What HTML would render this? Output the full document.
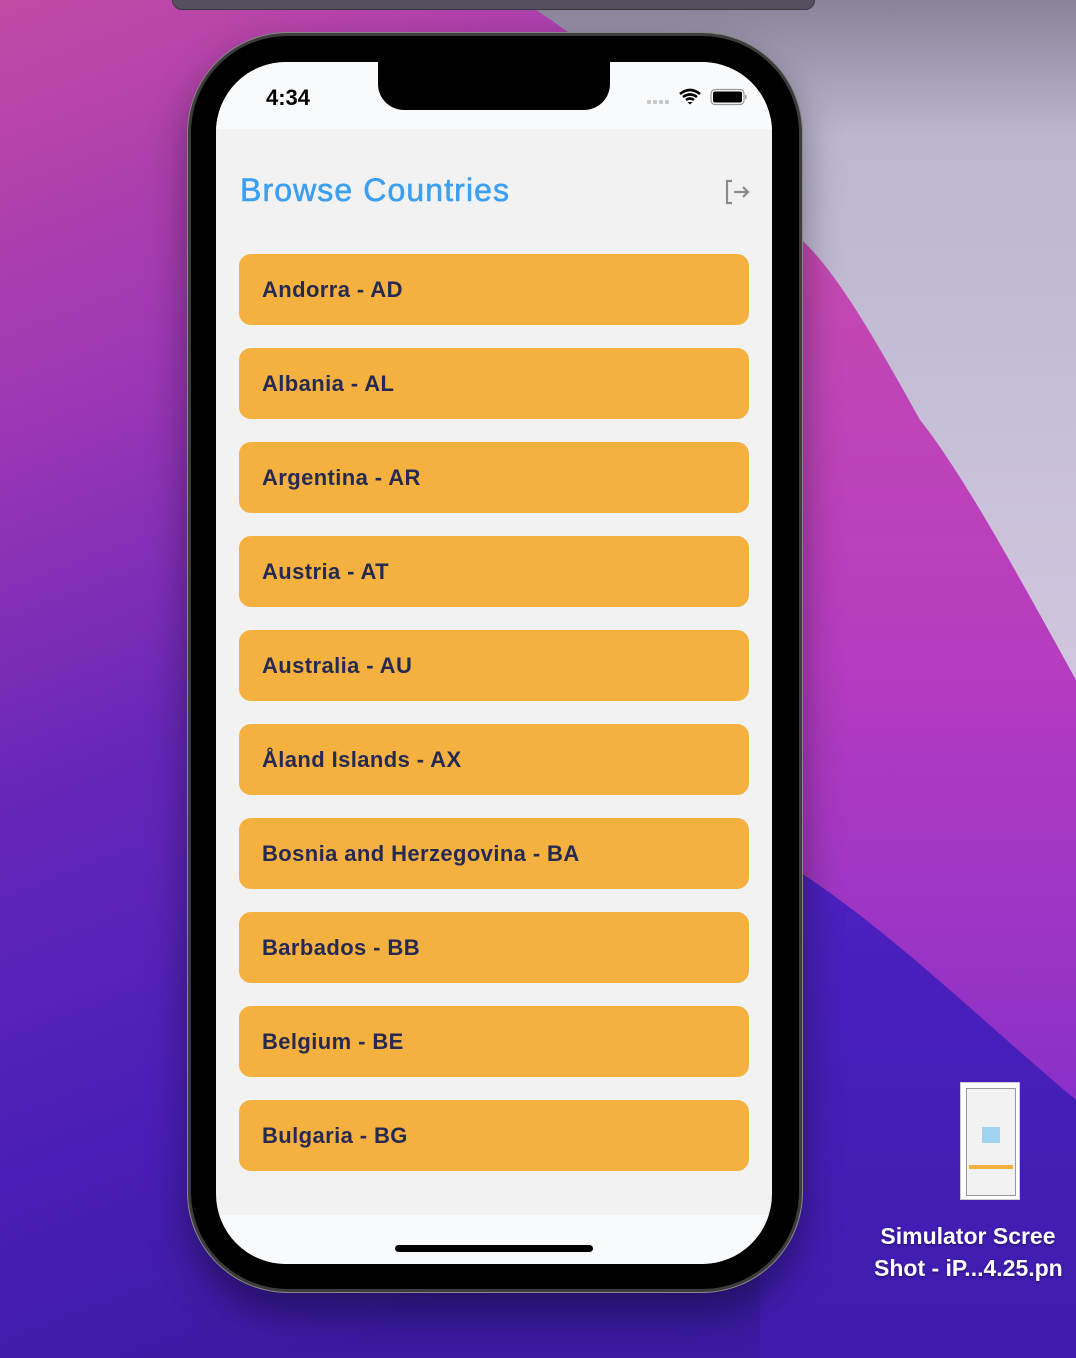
<!DOCTYPE html>
<html><head><meta charset="utf-8"><style>
*{margin:0;padding:0;box-sizing:border-box}
body{width:1076px;height:1358px;overflow:hidden;position:relative;font-family:"Liberation Sans",sans-serif;background:#5a24b8}
.bgsvg{position:absolute;left:0;top:0}
.topbar{position:absolute;left:172px;top:-10px;width:643px;height:20px;background:#55505e;border-radius:10px;border:1px solid #3a3640}
.phone{position:absolute;left:188px;top:33px;width:614px;height:1259px;background:#000;border-radius:100px;border:3px solid #3c3c3c;box-shadow:0 0 0 1px #888,0 20px 40px rgba(0,0,0,.4)}
.screen{position:absolute;left:216px;top:62px;width:556px;height:1202px;background:#f2f2f2;border-radius:70px;overflow:hidden}
.status{position:absolute;left:0;top:0;width:556px;height:67px;background:#f9fafc}
.notch{position:absolute;left:162px;top:0;width:232px;height:48px;background:#000;border-radius:0 0 26px 26px}
.time{position:absolute;left:50px;top:23px;font-size:22px;font-weight:bold;color:#000}
.home{position:absolute;left:0;top:1153px;width:556px;height:49px;background:#f9fafc}
.bar{position:absolute;left:179px;top:1183px;width:198px;height:7px;border-radius:4px;background:#000}
h1{position:absolute;left:24px;top:110px;font-size:32px;font-weight:normal;color:#3c9ff0;letter-spacing:1.1px;-webkit-text-stroke:0.6px #3c9ff0}
.card{position:absolute;left:23px;width:510px;height:71px;background:#f4b13f;border-radius:12px;font-size:22px;font-weight:bold;color:#262a52;padding-left:23px;line-height:71px;letter-spacing:0.4px}
.icon{position:absolute;left:960px;top:1082px;width:60px;height:118px;background:#fff;border:1px solid #ccc}
.icon .in{position:absolute;left:5px;top:5px;width:50px;height:108px;border:1px solid #999;background:#f2f2f2}
.lbl{position:absolute;left:874px;top:1220px;color:#fff;font-weight:bold;font-size:23px;line-height:32px;text-shadow:0 1px 2px rgba(0,0,0,.5);white-space:nowrap}
</style></head><body>
<svg class="bgsvg" width="1076" height="1358" viewBox="0 0 1076 1358">
<defs>
<linearGradient id="g1" x1="0" y1="0" x2="0.3" y2="1"><stop offset="0" stop-color="#c24aa5"/><stop offset="0.3" stop-color="#9a36b5"/><stop offset="0.55" stop-color="#6526b8"/><stop offset="0.8" stop-color="#4a1eb8"/><stop offset="1" stop-color="#3a1aa0"/></linearGradient>
<linearGradient id="g2" x1="0" y1="0" x2="0" y2="1"><stop offset="0" stop-color="#8a8298"/><stop offset="0.2" stop-color="#bdb6d0"/><stop offset="1" stop-color="#d0c6de"/></linearGradient>
<linearGradient id="g3" x1="0" y1="0" x2="0" y2="1"><stop offset="0" stop-color="#c54ab0"/><stop offset="0.5" stop-color="#b63cc0"/><stop offset="1" stop-color="#8a30c8"/></linearGradient>
<linearGradient id="g4" x1="0" y1="0" x2="0" y2="1"><stop offset="0" stop-color="#4c20c0"/><stop offset="1" stop-color="#3e1cae"/></linearGradient>
</defs>
<rect width="1076" height="1358" fill="url(#g1)"/>
<path d="M780 220 L1076 220 L1076 1100 C980 1020 880 920 780 860 Z" fill="url(#g3)"/>
<path d="M520 0 L1076 0 L1076 680 C1010 560 960 470 920 420 C870 330 830 260 790 230 C700 150 620 60 520 0 Z" fill="url(#g2)"/>
<path d="M780 860 C880 920 980 1020 1076 1100 L1076 1358 L760 1358 L760 860 Z" fill="url(#g4)"/>
</svg>
<div class="topbar"></div>
<div class="phone"></div>
<div class="screen">
<div class="status"></div>
<div class="notch"></div>
<div class="time">4:34</div>
<svg style="position:absolute;left:430px;top:24px" width="102" height="22" viewBox="0 0 102 22">
<g fill="#c8c8c8"><rect x="1" y="14" width="4" height="4" rx="1"/><rect x="7" y="14" width="4" height="4" rx="1"/><rect x="13" y="14" width="4" height="4" rx="1"/><rect x="19" y="14" width="4" height="4" rx="1"/></g>
<path d="M34 8 Q44 0 54 8 M37 11 Q44 6 51 11 M40 14 Q44 11 48 14" stroke="#000" stroke-width="2.6" fill="none"/>
<path d="M41.5 16 L44 18.5 L46.5 16 Z" fill="#000"/>
<rect x="65" y="3.5" width="33" height="15" rx="4" fill="none" stroke="#999" stroke-width="1.2"/>
<rect x="67" y="5.5" width="29" height="11" rx="2" fill="#000"/>
<rect x="99" y="9" width="1.5" height="4" fill="#999"/>
</svg>
<h1>Browse Countries</h1>
<svg style="position:absolute;left:508px;top:117px" width="28" height="26" viewBox="0 0 28 26">
<path d="M8 2 H3 V24 H8" stroke="#8a8a8a" stroke-width="2.2" fill="none"/>
<path d="M10 13 H24 M19 8 L24 13 L19 18" stroke="#8a8a8a" stroke-width="2.2" fill="none"/>
</svg>
<div class="card" style="top:192px">Andorra - AD</div>
<div class="card" style="top:286px">Albania - AL</div>
<div class="card" style="top:380px">Argentina - AR</div>
<div class="card" style="top:474px">Austria - AT</div>
<div class="card" style="top:568px">Australia - AU</div>
<div class="card" style="top:662px">Åland Islands - AX</div>
<div class="card" style="top:756px">Bosnia and Herzegovina - BA</div>
<div class="card" style="top:850px">Barbados - BB</div>
<div class="card" style="top:944px">Belgium - BE</div>
<div class="card" style="top:1038px">Bulgaria - BG</div>
<div class="home"></div>
<div class="bar"></div>
</div>
<div class="icon"><div class="in"><div style="position:absolute;left:15px;top:38px;width:18px;height:16px;background:#9fd3f0"></div><div style="position:absolute;left:2px;top:76px;width:44px;height:4px;background:#f4b13f"></div></div></div>
<div class="lbl">&nbsp;Simulator Scree<br>Shot - iP...4.25.pn</div>
</body></html>
